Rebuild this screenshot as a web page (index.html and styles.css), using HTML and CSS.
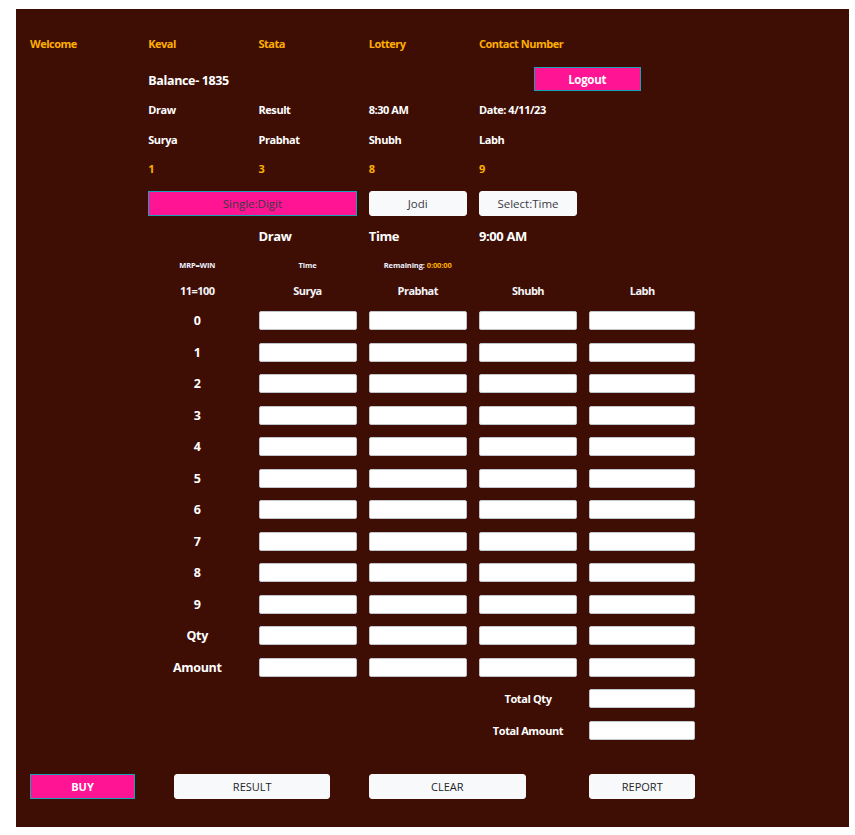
FILE: index.html
```html
<!DOCTYPE html>
<html lang="en">
<head>
<meta charset="utf-8">
<title>Keval Stata Lottery</title>
<link rel="stylesheet" href="styles.css">
</head>
<body>
<div class="panel">
  <div class="row r-head">
    <span class="gold lbl">Welcome</span>
    <span class="gold lbl">Keval</span>
    <span class="gold lbl">Stata</span>
    <span class="gold lbl">Lottery</span>
    <span class="gold lbl">Contact Number</span>
  </div>
  <div class="row r-balance">
    <span class="balance c2">Balance- 1835</span>
    <button class="btn pink logout">Logout</button>
  </div>
  <div class="row r-info">
    <span class="small c2">Draw</span>
    <span class="small">Result</span>
    <span class="small">8:30 AM</span>
    <span class="small">Date: 4/11/23</span>
  </div>
  <div class="row r-names">
    <span class="small c2">Surya</span>
    <span class="small">Prabhat</span>
    <span class="small">Shubh</span>
    <span class="small">Labh</span>
  </div>
  <div class="row r-nums">
    <span class="small gold c2">1</span>
    <span class="small gold">3</span>
    <span class="small gold">8</span>
    <span class="small gold">9</span>
  </div>
  <div class="row r-modes">
    <button class="btn pink mode single">Single:Digit</button>
    <button class="btn light mode">Jodi</button>
    <button class="btn light mode">Select:Time</button>
  </div>
  <div class="row r-draw">
    <span class="big c3">Draw</span>
    <span class="big">Time</span>
    <span class="big">9:00 AM</span>
  </div>
  <div class="row r-tiny">
    <span class="tiny c2 mid">MRP=WIN</span>
    <span class="tiny mid">Time</span>
    <span class="tiny mid">Remaining: <span class="gold">0:00:00</span></span>
  </div>
  <div class="row r-cols">
    <span class="colhead c2 mid">11=100</span>
    <span class="colhead mid">Surya</span>
    <span class="colhead mid">Prabhat</span>
    <span class="colhead mid">Shubh</span>
    <span class="colhead mid">Labh</span>
  </div>
  <div class="row bets">
    <span class="num c2">0</span><input class="cell"><input class="cell"><input class="cell"><input class="cell">
    <span class="num c2">1</span><input class="cell"><input class="cell"><input class="cell"><input class="cell">
    <span class="num c2">2</span><input class="cell"><input class="cell"><input class="cell"><input class="cell">
    <span class="num c2">3</span><input class="cell"><input class="cell"><input class="cell"><input class="cell">
    <span class="num c2">4</span><input class="cell"><input class="cell"><input class="cell"><input class="cell">
    <span class="num c2">5</span><input class="cell"><input class="cell"><input class="cell"><input class="cell">
    <span class="num c2">6</span><input class="cell"><input class="cell"><input class="cell"><input class="cell">
    <span class="num c2">7</span><input class="cell"><input class="cell"><input class="cell"><input class="cell">
    <span class="num c2">8</span><input class="cell"><input class="cell"><input class="cell"><input class="cell">
    <span class="num c2">9</span><input class="cell"><input class="cell"><input class="cell"><input class="cell">
    <span class="num c2">Qty</span><input class="cell"><input class="cell"><input class="cell"><input class="cell">
    <span class="num c2">Amount</span><input class="cell"><input class="cell"><input class="cell"><input class="cell">
    <span class="total c5">Total Qty</span><input class="cell">
    <span class="total c5">Total Amount</span><input class="cell">
  </div>
  <div class="row r-actions">
    <button class="btn pink act buy">BUY</button>
    <button class="btn light act result">RESULT</button>
    <button class="btn light act clear">CLEAR</button>
    <button class="btn light act report">REPORT</button>
  </div>
</div>
</body>
</html>
```
FILE: styles.css
```css
* { box-sizing: border-box; }
html, body { background: #ffffff; }
body {
  margin: 9px 6px 0 16px;
  font-family: "Open Sans", "Noto Sans", "Liberation Sans", sans-serif;
  color: #ffffff;
}
.panel {
  background: #3e0e05;
  height: 818px;
  padding: 23px 0 0 14px;
  display: flex;
  flex-direction: column;
}
.row {
  display: grid;
  grid-template-columns: 106px 98px 98px 98px 98px 106px;
  column-gap: 12.25px;
  align-items: center;
}
.c2 { grid-column-start: 2; }
.c3 { grid-column-start: 3; }
.c5 { grid-column-start: 5; }
.mid { justify-self: center; }
.gold { color: #ffae00; }

.lbl { font-size: 11px; font-weight: 700; line-height: 24px; letter-spacing: -0.5px; }
.r-head { height: 24px; }

.r-balance { height: 24px; margin-top: 11px; }
.balance { font-size: 12.5px; font-weight: 700; grid-column: 2 / span 2; padding-top: 3px; letter-spacing: -0.35px; }
.logout {
  grid-column: 5 / span 2;
  justify-self: center;
  width: 107px;
  height: 24px;
  font-size: 11.5px;
  font-weight: 700;
  color: #ffffff;
  letter-spacing: -0.3px;
}

.small { font-size: 11px; font-weight: 700; line-height: 20px; letter-spacing: -0.45px; }
.r-info { height: 20px; margin-top: 9px; }
.r-names { height: 20px; margin-top: 9.5px; }
.r-nums { height: 20px; margin-top: 9.5px; }

.r-modes { height: 25px; margin-top: 12px; }
.mode { height: 25px; font-size: 11.5px; font-weight: 400; color: #3a3a44; }
.single { grid-column: 2 / span 2; }

.big { font-size: 13px; font-weight: 700; line-height: 20px; letter-spacing: -0.4px; }
.r-draw { height: 20px; margin-top: 10px; }

.tiny { font-size: 7.5px; font-weight: 700; line-height: 12px; color: #eef2ff; letter-spacing: -0.1px; }
.r-tiny { height: 12px; margin-top: 13px; }

.colhead { font-size: 11px; font-weight: 700; line-height: 20px; letter-spacing: -0.55px; color: #f4f4f8; }
.r-cols { height: 20px; margin-top: 10px; }

.bets {
  margin-top: 10px;
  grid-auto-rows: 19px;
  row-gap: 12.5px;
}
.num { font-size: 12.5px; font-weight: 700; justify-self: center; line-height: 19px; letter-spacing: -0.3px; }
.total { font-size: 11px; font-weight: 700; justify-self: center; line-height: 19px; letter-spacing: -0.4px; }
.cell {
  width: 100%;
  height: 19px;
  margin: 0;
  padding: 0 4px;
  background: #ffffff;
  border: 1px solid #c3c5cc;
  border-radius: 2px;
  outline: none;
}

.btn {
  font-family: inherit;
  margin: 0;
  padding: 0;
  cursor: pointer;
}
.pink {
  background: #ff1493;
  border: 1px solid #17a2b8;
  border-radius: 0;
}
.light {
  background: #f8f9fa;
  border: 1px solid #f8f9fa;
  border-radius: 3px;
}

.r-actions { margin-top: 34.8px; height: 25px; }
.act { height: 25px; font-size: 11px; color: #212529; font-weight: 400; }
.buy { width: 105px; color: #ffffff; font-weight: 700; }
.result { grid-column: 2 / span 2; margin-left: 26px; width: 156px; }
.clear { grid-column: 4 / span 2; width: 157px; }
.report { grid-column: 6; width: 106px; }
```
